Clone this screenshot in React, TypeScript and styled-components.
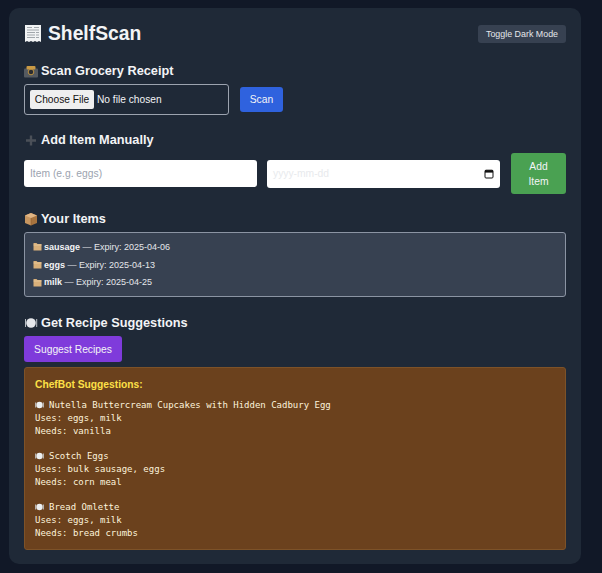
import React from "react";
import styled, { createGlobalStyle } from "styled-components";

const Global = createGlobalStyle`
  html, body { margin: 0; padding: 0; background: #111827; }
  body { font-family: "Liberation Sans", Arial, sans-serif; color: #f3f4f6; }
`;
const Page = styled.div`
  width: 602px; height: 573px; box-sizing: border-box; padding: 8px 21px 9px 9px; overflow: hidden;
`;
const Card = styled.main`
  height: 556px; box-sizing: border-box; background: #1f2937; border-radius: 10px; padding: 15px 15px 14px;
  display: flex; flex-direction: column;
`;
const Header = styled.header`
  display: flex; justify-content: space-between; align-items: center; height: 21px; margin-bottom: 19px;
`;
const Title = styled.h1`
  margin: 0; font-size: 19.3px; font-weight: 700; color: #f3f4f6; display: flex; align-items: center; gap: 6px; line-height: 21px;
`;
const Toggle = styled.button`
  border: 0; background: #374151; color: #e5e7eb; font: 8.9px "Liberation Sans", sans-serif; border-radius: 3px;
  height: 18px; width: 88px; padding: 0;
`;
const Heading = styled.h2<{ $gap: number }>`
  margin: 0 0 ${(p) => p.$gap}px; font-size: 12.75px; line-height: 16px; font-weight: 700; color: #f3f4f6;
  display: flex; align-items: center; gap: 3px;
`;
const ScanRow = styled.section`
  display: flex; align-items: center; gap: 11px; margin-bottom: 17px;
`;
const FileBox = styled.div`
  width: 205px; height: 31px; box-sizing: border-box; border: 1px solid #9ca3af; border-radius: 3px;
  display: flex; align-items: center; padding-left: 5px; overflow: hidden;
`;
const FileInput = styled.input`
  font: 10.2px "Liberation Sans", sans-serif; color: #f3f4f6; width: 195px;
  &::file-selector-button {
    font: 10.2px "Liberation Sans", sans-serif; height: 19px; width: 64px; padding: 0; margin-right: 3px;
    background: #efefef; color: #111; border: 0; border-radius: 2px;
  }
`;
const Btn = styled.button<{ $bg: string; $w: number; $h: number }>`
  background: ${(p) => p.$bg}; width: ${(p) => p.$w}px; height: ${(p) => p.$h}px; border: 0; border-radius: 3px;
  color: #f3f4f6; font: 10.3px/15px "Liberation Sans", sans-serif; padding: 0; flex: none;
`;
const AddRow = styled.section`
  display: flex; align-items: center; gap: 10px; margin-bottom: 17px;
`;
const AddBtn = styled(Btn)`
  margin-left: 1px;
`;
const TextInput = styled.input`
  width: 233px; height: 27px; box-sizing: border-box; border: 0; border-radius: 3px; background: #fff; flex: none;
  padding: 0 6px; font: 10.3px "Liberation Sans", sans-serif; color: #111;
  &::placeholder { color: #9ca3af; }
`;
const DateField = styled.div`
  width: 233px; height: 28px; box-sizing: border-box; border-radius: 3px; background: #fff; flex: none;
  padding: 0 6px; font: 10.3px "Liberation Sans", sans-serif; color: #e8eaed;
  display: flex; align-items: center; justify-content: space-between;
`;
const Items = styled.ul`
  list-style: none; margin: 0 0 18px; padding: 5px 8px; height: 65px; box-sizing: border-box;
  background: #374151; border: 1px solid #8b94a3; border-radius: 3px;
  display: flex; flex-direction: column; justify-content: center;
`;
const Item = styled.li`
  height: 18px; display: flex; align-items: center; font-size: 9px; color: #e5e7eb; white-space: pre; gap: 2px;
  b { color: #f3f4f6; }
`;
const Suggest = styled.div`
  margin-bottom: 5px;
`;
const Result = styled.section`
  flex: none; height: 183px; box-sizing: border-box; background: #6b411d; border: 1px solid #7d5228; border-radius: 3px;
  padding: 10px 10px;
`;
const ResultTitle = styled.h3`
  margin: 0 0 7px; font-size: 10.25px; line-height: 14px; font-weight: 700; color: #fde047;
`;
const Recipe = styled.div`
  margin-bottom: 12.75px;
`;
const Line = styled.div`
  font: 9px/12.75px "DejaVu Sans Mono", monospace; color: #fdf3dc; white-space: pre; display: flex; align-items: center; height: 12.75px;
`;

const Receipt = () => (
  <svg width="18" height="20" viewBox="0 0 18 20">
    <path d="M1 1h16v17l-2-1-2 1-2-1-2 1-2-1-2 1-2-1-2 1z" fill="#f1f3f4" />
    <path d="M3 3.500h5M10 3.500h5M3 6h12M3 8.500h8M12 8.500h3M3 11h8M12 11h3M3 13.500h8M12 13.500h3" stroke="#8d9399" strokeWidth=".8" />
  </svg>
);
const Camera = () => (
  <svg width="14" height="13" viewBox="0 0 14 13">
    <rect x="0" y="3.500" width="14" height="9" rx="1" fill="#555a60" />
    <rect x="2.500" y="1" width="9" height="3.500" rx="1" fill="#c99a45" />
    <circle cx="7" cy="7" r="2.800" fill="#2a2c30" stroke="#d9a441" strokeWidth=".8" />
  </svg>
);
const Plus = () => (
  <svg width="14" height="13" viewBox="0 0 14 13">
    <path d="M7 1.500v10M2 6.500h10" stroke="#4b5058" strokeWidth="2.400" />
  </svg>
);
const Box = () => (
  <svg width="14" height="14" viewBox="0 0 14 14">
    <path d="M7 1l6 2.500v7.500l-6 2.500z" fill="#a8743f" />
    <path d="M7 1l-6 2.500v7.500l6 2.500z" fill="#c79660" />
    <path d="M1 3.500l6 2.500 6-2.500-6-2.500z" fill="#e0b584" />
    <path d="M7 6v7.500" stroke="#8a5b2e" strokeWidth=".5" />
  </svg>
);
const Plate = () => (
  <svg width="14" height="12" viewBox="0 0 14 12">
    <circle cx="7" cy="6" r="4.800" fill="#e5e7eb" />
    <path d="M1.500 2v8M12.700 2v8" stroke="#c9ced4" strokeWidth=".9" />
  </svg>
);
const Folder = () => (
  <svg width="9" height="9" viewBox="0 0 9 9" style={{ flex: "none" }}>
    <path d="M.5 1h3l1 1h4v6.500h-8z" fill="#d9b07a" />
    <path d="M.5 3h8" stroke="#ecd0a4" strokeWidth=".7" />
  </svg>
);
const SmallPlate = () => (
  <svg width="9" height="8" viewBox="0 0 9 8" style={{ flex: "none", marginRight: 5 }}>
    <circle cx="4.500" cy="4" r="3.200" fill="#eceff1" />
    <path d="M.7 1.500v5M8.300 1.500v5" stroke="#c9cdd1" />
  </svg>
);
const Calendar = () => (
  <svg width="10" height="10" viewBox="0 0 10 10">
    <rect x="1" y="1.200" width="8" height="7.800" rx="1" fill="none" stroke="#111" strokeWidth="1" />
    <rect x="1" y="1.200" width="8" height="2.400" fill="#111" />
  </svg>
);

const items = [["sausage", "2025-04-06"], ["eggs", "2025-04-13"], ["milk", "2025-04-25"]];
const recipes = [
  ["Nutella Buttercream Cupcakes with Hidden Cadbury Egg", "eggs, milk", "vanilla"],
  ["Scotch Eggs", "bulk sausage, eggs", "corn meal"],
  ["Bread Omlette", "eggs, milk", "bread crumbs"],
];

export default function App() {
  return (
    <Page>
      <Global />
      <Card>
        <Header>
          <Title><Receipt />ShelfScan</Title>
          <Toggle>Toggle Dark Mode</Toggle>
        </Header>
        <Heading $gap={5}><Camera />Scan Grocery Receipt</Heading>
        <ScanRow>
          <FileBox><FileInput type="file" /></FileBox>
          <Btn $bg="#2f62de" $w={43} $h={25}>Scan</Btn>
        </ScanRow>
        <Heading $gap={5}><Plus />Add Item Manually</Heading>
        <AddRow>
          <TextInput placeholder="Item (e.g. eggs)" />
          <DateField>yyyy-mm-dd<Calendar /></DateField>
          <AddBtn $bg="#4aa152" $w={55} $h={41}>Add<br />Item</AddBtn>
        </AddRow>
        <Heading $gap={5}><Box />Your Items</Heading>
        <Items>
          {items.map(([n, d]) => (
            <Item key={n}><Folder /><span><b>{n}</b> — Expiry: {d}</span></Item>
          ))}
        </Items>
        <Heading $gap={5}><Plate />Get Recipe Suggestions</Heading>
        <Suggest><Btn $bg="#7f3bdb" $w={98} $h={26}>Suggest Recipes</Btn></Suggest>
        <Result>
          <ResultTitle>ChefBot Suggestions:</ResultTitle>
          {recipes.map(([t, u, n]) => (
            <Recipe key={t}>
              <Line><SmallPlate />{t}</Line>
              <Line>Uses: {u}</Line>
              <Line>Needs: {n}</Line>
            </Recipe>
          ))}
        </Result>
      </Card>
    </Page>
  );
}
